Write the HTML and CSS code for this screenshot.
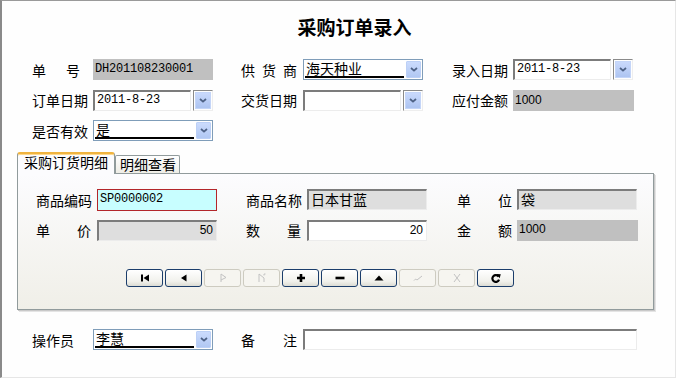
FILE: index.html
```html
<!DOCTYPE html>
<html lang="zh-CN">
<head>
<meta charset="utf-8">
<title>采购订单录入</title>
<link rel="stylesheet" href="styles.css">
</head>
<body>
<div class="window">
  <h1 class="title">采购订单录入</h1>

  <div class="form-grid">
    <div class="lbl j w48">单 号</div>
    <div class="fld flat gray mono">DH201108230001</div>
    <div class="lbl j">供 货 商</div>
    <div class="combo"><span class="combo-text">海天种业</span><span class="drop"><svg viewBox="0 0 8 5" width="8" height="5"><path d="M1 1l3 2.6L7 1" fill="none" stroke="#4d6185" stroke-width="1.8"/></svg></span></div>
    <div class="lbl">录入日期</div>
    <div class="date"><div class="fld sunken white mono">2011-8-23</div><span class="dbtn"><span class="dbtn-in"><svg viewBox="0 0 8 5" width="8" height="5"><path d="M1 1l3 2.6L7 1" fill="none" stroke="#4d6185" stroke-width="1.8"/></svg></span></span></div>

    <div class="lbl">订单日期</div>
    <div class="date"><div class="fld sunken white mono">2011-8-23</div><span class="dbtn"><span class="dbtn-in"><svg viewBox="0 0 8 5" width="8" height="5"><path d="M1 1l3 2.6L7 1" fill="none" stroke="#4d6185" stroke-width="1.8"/></svg></span></span></div>
    <div class="lbl">交货日期</div>
    <div class="date"><div class="fld sunken white mono"></div><span class="dbtn"><span class="dbtn-in"><svg viewBox="0 0 8 5" width="8" height="5"><path d="M1 1l3 2.6L7 1" fill="none" stroke="#4d6185" stroke-width="1.8"/></svg></span></span></div>
    <div class="lbl">应付金额</div>
    <div class="fld flat gray sans w121">1000</div>

    <div class="lbl">是否有效</div>
    <div class="combo"><span class="combo-text">是</span><span class="drop"><svg viewBox="0 0 8 5" width="8" height="5"><path d="M1 1l3 2.6L7 1" fill="none" stroke="#4d6185" stroke-width="1.8"/></svg></span></div>
  </div>

  <div class="tabs">
    <div class="tab-strip">
      <div class="tab active">采购订货明细</div>
      <div class="tab">明细查看</div>
    </div>
    <div class="panel">
      <div class="panel-grid">
        <div class="lbl">商品编码</div>
        <div class="fld cyan mono">SP0000002</div>
        <div class="lbl">商品名称</div>
        <div class="fld sunken lgray">日本甘蓝</div>
        <div class="lbl j w55">单 位</div>
        <div class="fld sunken lgray">袋</div>

        <div class="lbl j w55">单 价</div>
        <div class="fld sunken lgray sans right">50</div>
        <div class="lbl j w55">数 量</div>
        <div class="fld sunken white sans right">20</div>
        <div class="lbl j w55">金 额</div>
        <div class="fld flat gray sans top w121">1000</div>
      </div>

      <div class="nav">
        <span class="nbtn"><svg viewBox="0 0 12 10" width="12" height="10"><rect x="2" y="1.5" width="2" height="7"/><polygon points="10,1.5 10,8.5 4.5,5"/></svg></span>
        <span class="nbtn"><svg viewBox="0 0 12 10" width="12" height="10"><polygon points="8.5,1.5 8.5,8.5 3,5"/></svg></span>
        <span class="nbtn off"><svg viewBox="0 0 12 10" width="12" height="10"><path d="M4 9V1l5 3.5L4 7" fill="none" stroke="#c2c2c2"/></svg></span>
        <span class="nbtn off"><svg viewBox="0 0 12 10" width="12" height="10"><path d="M3 9V1l5 4M8 2.5V1h1.5M8 5v4" fill="none" stroke="#c2c2c2"/></svg></span>
        <span class="nbtn"><svg viewBox="0 0 12 10" width="12" height="10"><path d="M6 1v8M2 5h8" stroke="#000" stroke-width="2.6"/></svg></span>
        <span class="nbtn"><svg viewBox="0 0 12 10" width="12" height="10"><rect x="1.5" y="3.7" width="9" height="2.6"/></svg></span>
        <span class="nbtn"><svg viewBox="0 0 12 10" width="12" height="10"><polygon points="1.5,7.5 10.5,7.5 6,2.5"/></svg></span>
        <span class="nbtn off"><svg viewBox="0 0 12 10" width="12" height="10"><path d="M2 7.5c1-1.5 2-1.5 3 -0.5L10 3" fill="none" stroke="#c2c2c2"/></svg></span>
        <span class="nbtn off"><svg viewBox="0 0 12 10" width="12" height="10"><path d="M3 1l6 8M9 1L3 9" fill="none" stroke="#c2c2c2"/></svg></span>
        <span class="nbtn"><svg viewBox="0 0 12 10" width="12" height="10"><path d="M8.6 3.6A3.4 3.4 0 1 0 9 6.6" fill="none" stroke="#000" stroke-width="2.2"/><polygon points="6.5,1 10.8,1.2 9.6,5.2"/></svg></span>
      </div>
    </div>
  </div>

  <div class="bottom-row">
    <div class="lbl">操作员</div>
    <div class="combo"><span class="combo-text">李慧</span><span class="drop"><svg viewBox="0 0 8 5" width="8" height="5"><path d="M1 1l3 2.6L7 1" fill="none" stroke="#4d6185" stroke-width="1.8"/></svg></span></div>
    <div class="lbl j">备 注</div>
    <div class="fld sunken white wide"></div>
  </div>
</div>
</body>
</html>
```
FILE: styles.css
```css
html, body {
  margin: 0;
  padding: 0;
  background: #ffffff;
}
body {
  font-family: "Noto Sans CJK SC", "Noto Sans", sans-serif;
  font-size: 14px;
  color: #000;
}
.window {
  width: 676px;
  height: 378px;
  box-sizing: border-box;
  border-top: 1px solid #9a9a9a;
  border-left: 2px solid #8a8a8a;
  border-right: 1px solid #e6e6e6;
  border-bottom: 1px solid #e6e6e6;
  background: #fefefe;
  overflow: hidden;
}
.title {
  margin: 0;
  padding: 14px 0 0 32px;
  height: 24px;
  line-height: 24px;
  font-size: 19px;
  font-weight: bold;
  text-align: center;
}
.form-grid {
  display: grid;
  grid-template-columns: 61px 148px 62px 149px 61px 121px;
  grid-template-rows: 21px 21px 21px;
  row-gap: 9.5px;
  margin: 20px 0 0 30px;
  align-items: center;
}
.lbl {
  width: 56px;
  line-height: 16px;
  white-space: nowrap;
}
.lbl.j {
  text-align: justify;
  text-align-last: justify;
}
.lbl.w48 { width: 48px; }
.lbl.w55 { width: 55px; }

.fld {
  box-sizing: border-box;
  width: 120px;
  height: 21px;
  padding: 0 2px;
  overflow: hidden;
  white-space: nowrap;
  line-height: 17px;
}
.fld.w121 { width: 121px; }
.fld.flat { border: none; padding-top: 2px; }
.fld.gray { background: #c0c0c0; }
.fld.lgray { background: #dedede; }
.fld.white { background: #ffffff; }
.fld.sunken {
  border-style: solid;
  border-width: 2px 1px 1px 2px;
  border-color: #7c7c7c #ececec #ececec #7c7c7c;
}
.fld.cyan {
  background: #c8feff;
  border: 1px solid #b3262a;
  line-height: 19px;
  padding-left: 2px;
}
.fld.right { text-align: right; padding-right: 3px; }
.fld.top { line-height: 14px; }
.mono {
  font-family: "Liberation Mono", "DejaVu Sans Mono", monospace;
  font-size: 12px;
  letter-spacing: -0.2px;
}
.sans {
  font-family: "Liberation Sans", Arial, sans-serif;
  font-size: 12px;
}
.fld.wide { width: 334px; }

.combo {
  box-sizing: border-box;
  width: 120px;
  height: 21px;
  border: 1px solid #7f9db9;
  background: #fff;
  display: flex;
  align-items: flex-start;
  padding: 0 1px 0 1px;
}
.combo-text {
  flex: 1;
  display: block;
  height: 16px;
  line-height: 17px;
  margin-right: 2px;
  padding-left: 1px;
  border-bottom: 2px solid #000;
  white-space: nowrap;
}
.drop {
  box-sizing: border-box;
  width: 15px;
  height: 17px;
  margin-top: 1px;
  border: 1px solid #bcd0f6;
  border-radius: 1px;
  background: linear-gradient(#cbdbfd, #b1c8f3);
  display: flex;
  align-items: center;
  justify-content: center;
}
.date {
  display: flex;
  gap: 2px;
  width: 120px;
}
.date .fld { width: 98px; }
.dbtn {
  box-sizing: border-box;
  width: 20px;
  height: 21px;
  border-style: solid;
  border-width: 1px;
  border-color: #8a8a8a #eeeeee #eeeeee #8a8a8a;
  padding: 1px;
  display: flex;
}
.dbtn-in {
  flex: 1;
  border: 1px solid #c4d5f8;
  background: linear-gradient(#c9d9fc, #adc4f1);
  display: flex;
  align-items: center;
  justify-content: center;
}

.tabs {
  margin: 11px 0 0 15px;
}
.tab-strip {
  display: flex;
  align-items: flex-end;
  height: 21px;
}
.tab {
  box-sizing: border-box;
  height: 18px;
  border: 1px solid #919b9c;
  border-bottom: none;
  border-radius: 2px 2px 0 0;
  background: linear-gradient(#ffffff, #eeede6);
  padding: 0 3px 0 4px;
  line-height: 16px;
  white-space: nowrap;
}
.tab.active {
  position: relative;
  z-index: 1;
  height: 22px;
  width: 98px;
  margin-bottom: -1px;
  border-top: 2px solid #f0b440;
  box-shadow: inset 0 1px 0 #ffd88a;
  border-radius: 3px 3px 0 0;
  background: #fcfcfe;
  padding: 0 0 0 6px;
  line-height: 17px;
}
.panel {
  box-sizing: border-box;
  width: 637px;
  height: 137px;
  border: 1px solid #919b9c;
  background: linear-gradient(#fcfcfe, #f0efe8);
  box-shadow: 1px 1px 0 #c9c9c9, 2px 2px 0 #e4e4e4;
  padding: 15px 0 0 18px;
}
.panel-grid {
  display: grid;
  grid-template-columns: 61px 149px 61px 150px 60px 121px;
  grid-template-rows: 21px 22px;
  row-gap: 9px;
  align-items: center;
}
.panel-grid .fld { height: 21px; }
.panel-grid .fld.cyan { height: 22px; }
.nav {
  display: flex;
  gap: 2px;
  margin: 28px 0 0 90px;
}
.nbtn {
  box-sizing: border-box;
  width: 37px;
  height: 18px;
  border: 1px solid #1b3d6b;
  border-radius: 3px;
  background: linear-gradient(#ffffff, #f1f1ec 70%, #dcdcd4);
  display: flex;
  align-items: center;
  justify-content: center;
}
.nbtn.off {
  border-color: #cdcbc0;
  background: #f6f5f0;
}
.bottom-row {
  display: grid;
  grid-template-columns: 61px 148px 62px 334px;
  height: 21px;
  align-items: center;
  margin: 19px 0 0 30px;
}
```
